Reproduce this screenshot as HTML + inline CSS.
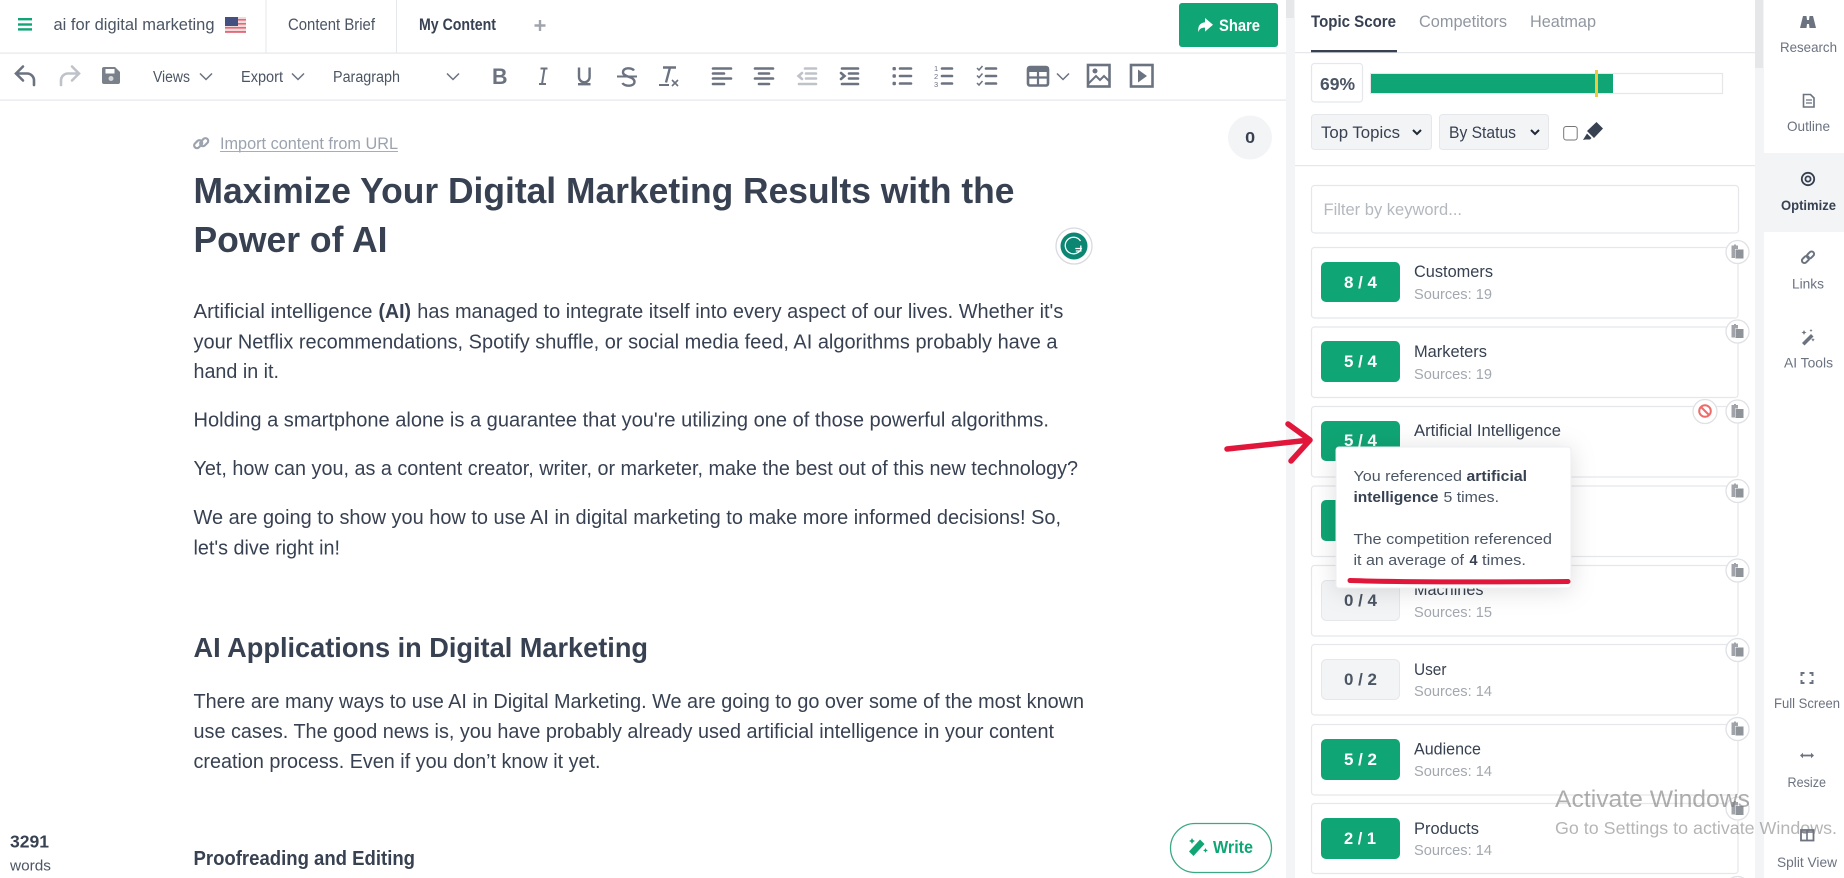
<!DOCTYPE html>
<html lang="en">
<head>
<meta charset="utf-8">
<title>ai for digital marketing</title>
<style>
html,body{margin:0;padding:0;background:#fff;width:1844px;height:878px;overflow:hidden}
svg{display:block;position:absolute;left:0;top:0}
text{font-family:"Liberation Sans",sans-serif;fill:#374151;white-space:pre}
.b{font-weight:700}
.p{font-size:20px}
.t{font-size:16.5px}
.s{font-size:15px;fill:#a3a8b0}
.g{font-size:17px;font-weight:700;fill:#fff}
.d{font-size:17px;font-weight:700;fill:#4b5563}
.r{font-size:14px;fill:#6b7280}
.tip{font-size:15px;fill:#4b5563}
.tb{font-size:15px;font-weight:700;fill:#374151}
.card{fill:#fff;stroke:#e5e7eb;stroke-width:1.2}
.ln{stroke:#6b7280;stroke-width:2.6;stroke-linecap:round;fill:none}
.li{stroke:#bfc3c9;stroke-width:2.6;stroke-linecap:round;fill:none}
.ch{stroke:#6b7280;stroke-width:1.5;fill:none}
</style>
</head>
<body>
<svg width="1844" height="878" viewBox="0 0 1844 878" xmlns="http://www.w3.org/2000/svg">
<defs>
<g id="cp">
<circle cx="0" cy="0" r="11.5" fill="#fff" stroke="#dfe1e5" stroke-width="1.3"/>
<path d="M-6-6.500h2.500v-1h2v1h2v3.500h-3v9h-3.500z" fill="#a0a4aa"/>
<rect x="-2" y="-2.500" width="8" height="9" fill="#8f949b"/>
</g>
</defs>

<!-- scroll strips -->
<rect x="1286" y="0" width="9" height="878" fill="#f3f4f6"/>
<rect x="1286" y="0" width="8" height="18" fill="#e6e7e9"/>
<rect x="1755" y="0" width="9" height="878" fill="#f3f4f6"/>
<rect x="1755" y="0" width="8" height="68" fill="#e6e7e9"/>

<!-- header -->
<rect x="0" y="52.500" width="1286" height="1.200" fill="#e5e7eb"/>
<rect x="0" y="99.500" width="1286" height="1.200" fill="#e5e7eb"/>
<rect x="265.500" y="0" width="1" height="53" fill="#e5e7eb"/>
<rect x="396" y="0" width="1" height="53" fill="#e5e7eb"/>
<g fill="#10a574"><rect x="18" y="18" width="14" height="2.400"/><rect x="18" y="23.300" width="14" height="2.400"/><rect x="18" y="28.200" width="14" height="2.400"/></g>
<text class="t" x="53.500" y="30" textLength="161" lengthAdjust="spacingAndGlyphs" style="fill:#4b5563">ai for digital marketing</text>
<rect x="225" y="17" width="21" height="16" fill="#f3dada"/>
<g fill="#e4687a"><rect x="225" y="19" width="21" height="1.600"/><rect x="225" y="23" width="21" height="1.600"/><rect x="225" y="27" width="21" height="1.600"/><rect x="225" y="31" width="21" height="1.800"/></g>
<rect x="225" y="17" width="13" height="9" fill="#44507f"/>
<text class="t" x="288" y="30" textLength="87" lengthAdjust="spacingAndGlyphs" style="fill:#4b5563">Content Brief</text>
<text class="t b" x="419" y="30" textLength="77" lengthAdjust="spacingAndGlyphs">My Content</text>
<path d="M540 20v11M534.500 25.500h11" stroke="#a0a5ad" stroke-width="2.400" fill="none"/>
<rect x="1179" y="3" width="99" height="44" rx="3" fill="#10a574"/>
<path d="M1205 18l8 6.800-8 6.800v-4c-3.600 0-5.600 1-6.600 4.600-.9-5.800 1.500-9.400 6.600-9.900z" fill="#fff"/>
<text class="t b" x="1219" y="31" textLength="41" lengthAdjust="spacingAndGlyphs" style="fill:#fff">Share</text>

<!-- toolbar -->
<path class="ln" d="M23 66.500L16 73.500l7 7M16 73.500h11a7 7 0 0 1 7 7v4.500"/>
<path class="li" d="M72 66.500l7 7-7 7M79 73.500H68a7 7 0 0 0-7 7v4.500"/>
<path d="M102 69a2 2 0 0 1 2-2h11l5 5v10a2 2 0 0 1-2 2h-14a2 2 0 0 1-2-2z" fill="#7b818a"/>
<rect x="105.500" y="69" width="9" height="4.500" fill="#fff"/>
<circle cx="111" cy="78.500" r="2.500" fill="#d5d7da"/>
<text class="t" x="153" y="82" textLength="37" lengthAdjust="spacingAndGlyphs" style="font-size:15.500px;fill:#4b5563">Views</text>
<path class="ch" d="M200 73.500l6 6 6-6"/>
<text class="t" x="241" y="82" textLength="42" lengthAdjust="spacingAndGlyphs" style="font-size:15.500px;fill:#4b5563">Export</text>
<path class="ch" d="M292 73.500l6 6 6-6"/>
<text class="t" x="333" y="82" textLength="67" lengthAdjust="spacingAndGlyphs" style="font-size:15.500px;fill:#4b5563">Paragraph</text>
<path class="ch" d="M447 73.500l6 6 6-6"/>
<text x="492" y="84" textLength="15.500" lengthAdjust="spacingAndGlyphs" style="font-size:22px;font-weight:700;fill:#6b7280">B</text>
<path d="M540.500 68.500h7M539 84h7M544.500 68.500l-2.500 15.500" stroke="#6b7280" stroke-width="2" fill="none"/>
<path d="M579 67.500v9.500a5.300 5.300 0 0 0 10.600 0v-9.500" stroke="#6b7280" stroke-width="2.400" fill="none"/>
<rect x="578" y="83" width="12.500" height="2.400" fill="#6b7280"/>
<path d="M634 70.500c-2-3-11-3.500-11 1.800 0 5.200 11.500 3.800 11.500 9.500 0 5-10 5-12 1.200" stroke="#6b7280" stroke-width="2.400" fill="none"/>
<rect x="617" y="75.500" width="20" height="2" fill="#6b7280"/>
<path d="M663 67.500h13M670 67.500l-4 15" stroke="#6b7280" stroke-width="2.400" fill="none"/>
<rect x="659" y="84" width="10" height="2" fill="#6b7280"/>
<path d="M672 80l6 6M678 80l-6 6" stroke="#6b7280" stroke-width="1.600"/>
<!-- aligns -->
<path class="ln" d="M713 68.500h18M713 73.500h11M713 78.500h18M713 84h11"/>
<path class="ln" d="M755 68.500h18M759 73.500h10M755 78.500h18M759 84h10"/>
<path class="li" d="M805 68.500h11M806 73.500h10M806 78.500h10M799 84h17M802 73l-3.500 3 3.500 3"/>
<path class="ln" d="M842 68.500h16M849 73.500h9M849 78.500h9M842 84h16M841 73l3.500 3-3.500 3"/>
<g fill="#6b7280"><rect x="892.500" y="67" width="3.400" height="3.400" rx="1"/><rect x="892.500" y="74.300" width="3.400" height="3.400" rx="1"/><rect x="892.500" y="81.800" width="3.400" height="3.400" rx="1"/></g>
<path class="ln" d="M900 68.500h11M900 76h11M900 83.500h11"/>
<text x="934" y="71" style="font-size:7.500px;fill:#6b7280">1</text><text x="934" y="79" style="font-size:7.500px;fill:#6b7280">2</text><text x="934" y="87" style="font-size:7.500px;fill:#6b7280">3</text>
<path class="ln" d="M942 68.500h10M942 76h10M942 83.500h10"/>
<path d="M977 68l2 2 3.500-4M977 75.500l2 2 3.500-4M977 83l2 2 3.500-4" stroke="#6b7280" stroke-width="1.500" fill="none"/>
<path class="ln" d="M986 68.500h10M986 76h10M986 83.500h10"/>
<rect x="1028" y="67" width="20" height="18.500" rx="2" fill="none" stroke="#6b7280" stroke-width="2.600"/>
<rect x="1028" y="67" width="20" height="5" fill="#6b7280"/>
<path d="M1038 70v15M1028 77.500h20" stroke="#6b7280" stroke-width="2.200"/>
<path class="ch" d="M1057 73.500l6 6 6-6"/>
<rect x="1088" y="65" width="21.500" height="21.500" fill="none" stroke="#6b7280" stroke-width="2.600"/>
<circle cx="1095" cy="71" r="2.500" fill="#6b7280"/>
<path d="M1088 84l8-8 4 4 4-4 5.500 5.500" stroke="#6b7280" stroke-width="2" fill="none"/>
<rect x="1131" y="65" width="21.500" height="21.500" fill="none" stroke="#6b7280" stroke-width="2.600"/>
<path d="M1138 69.500l9 6.500-9 6.500z" fill="#6b7280"/>

<!-- import -->
<g fill="none" stroke="#9ca3af" stroke-width="2.200"><rect x="193.500" y="141.500" width="9" height="5.500" rx="2.700" transform="rotate(-45 198 144)"/><rect x="199.500" y="139.500" width="9" height="5.500" rx="2.700" transform="rotate(-45 204 142)"/></g>
<text class="t" x="220" y="149" textLength="178" lengthAdjust="spacingAndGlyphs" style="fill:#9ca3af">Import content from URL</text>
<rect x="220" y="151" width="178" height="1" fill="#a8adb5"/>
<circle cx="1250" cy="137.500" r="22" fill="#f3f4f6"/>
<text class="b" x="1245.200" y="143" textLength="10" lengthAdjust="spacingAndGlyphs" style="font-size:16px">0</text>

<!-- content -->
<text class="b" x="193.500" y="203" textLength="821" lengthAdjust="spacingAndGlyphs" style="font-size:36px">Maximize Your Digital Marketing Results with the</text>
<text class="b" x="193.500" y="252" textLength="194" lengthAdjust="spacingAndGlyphs" style="font-size:36px">Power of AI</text>
<circle cx="1074" cy="246" r="18" fill="#fff" stroke="#d8dae0" stroke-width="1.300"/>
<circle cx="1074" cy="246" r="13.500" fill="#0a8672"/>
<path d="M1080.500 241a8.300 8.300 0 1 0 .8 7.500h-6M1080.800 245.500v5.500h-5" stroke="#fff" stroke-width="1.300" fill="none"/>

<text class="p" x="193.500" y="318" textLength="179" lengthAdjust="spacingAndGlyphs">Artificial intelligence</text>
<text class="p b" x="378.500" y="318" textLength="32.500" lengthAdjust="spacingAndGlyphs">(AI)</text>
<text class="p" x="417.300" y="318" textLength="646" lengthAdjust="spacingAndGlyphs">has managed to integrate itself into every aspect of our lives. Whether it's</text>
<text class="p" x="193.500" y="348.300" textLength="864" lengthAdjust="spacingAndGlyphs">your Netflix recommendations, Spotify shuffle, or social media feed, AI algorithms probably have a</text>
<text class="p" x="193.500" y="378" textLength="85.500" lengthAdjust="spacingAndGlyphs">hand in it.</text>
<text class="p" x="193.500" y="426.700" textLength="855.500" lengthAdjust="spacingAndGlyphs">Holding a smartphone alone is a guarantee that you're utilizing one of those powerful algorithms.</text>
<text class="p" x="193.500" y="475" textLength="884.500" lengthAdjust="spacingAndGlyphs">Yet, how can you, as a content creator, writer, or marketer, make the best out of this new technology?</text>
<text class="p" x="193.500" y="524" textLength="867.500" lengthAdjust="spacingAndGlyphs">We are going to show you how to use AI in digital marketing to make more informed decisions! So,</text>
<text class="p" x="193.500" y="554.300" textLength="146.500" lengthAdjust="spacingAndGlyphs">let's dive right in!</text>
<text class="b" x="193.500" y="657" textLength="454.500" lengthAdjust="spacingAndGlyphs" style="font-size:28px">AI Applications in Digital Marketing</text>
<text class="p" x="193.500" y="708" textLength="890.500" lengthAdjust="spacingAndGlyphs">There are many ways to use AI in Digital Marketing. We are going to go over some of the most known</text>
<text class="p" x="193.500" y="738" textLength="860.500" lengthAdjust="spacingAndGlyphs">use cases. The good news is, you have probably already used artificial intelligence in your content</text>
<text class="p" x="193.500" y="768" textLength="407" lengthAdjust="spacingAndGlyphs">creation process. Even if you don’t know it yet.</text>
<text class="b" x="193.500" y="865" textLength="221.500" lengthAdjust="spacingAndGlyphs" style="font-size:20px">Proofreading and Editing</text>

<text class="b" x="10" y="847.700" textLength="39" lengthAdjust="spacingAndGlyphs" style="font-size:17.500px">3291</text>
<text x="10" y="870.700" textLength="41" lengthAdjust="spacingAndGlyphs" style="font-size:15px;fill:#4b5563">words</text>

<rect x="1170.500" y="823.500" width="101" height="49" rx="24.500" fill="#fff" stroke="#3ba986" stroke-width="1.300"/>
<path d="M1189 853l11-12 4.500 4.500-11 12z" fill="#10a574" transform="translate(0 -1.500)"/>
<path d="M1192 838l1 2 2 1-2 1-1 2-1-2-2-1 2-1zM1205.500 848l.8 1.600 1.600.8-1.600.8-.8 1.600-.8-1.600-1.600-.8 1.600-.8z" fill="#10a574"/>
<text class="b" x="1213" y="853" textLength="40" lengthAdjust="spacingAndGlyphs" style="font-size:17.500px;fill:#10a574">Write</text>

<!-- right panel -->
<text class="t b" x="1311" y="27" textLength="85" lengthAdjust="spacingAndGlyphs">Topic Score</text>
<text class="t" x="1419" y="27" textLength="88" lengthAdjust="spacingAndGlyphs" style="fill:#9197a1">Competitors</text>
<text class="t" x="1530" y="27" textLength="66" lengthAdjust="spacingAndGlyphs" style="fill:#9197a1">Heatmap</text>
<rect x="1295" y="52" width="460" height="1.200" fill="#e5e7eb"/>
<rect x="1311" y="50" width="86" height="2.300" fill="#374151"/>
<rect x="1311.500" y="63.500" width="51" height="38.500" rx="3" fill="#fff" stroke="#e5e7eb" stroke-width="1.200"/>
<text class="b" x="1320" y="90" textLength="35" lengthAdjust="spacingAndGlyphs" style="font-size:17.500px;fill:#4b5563">69%</text>
<rect x="1370.500" y="73.500" width="352" height="20" fill="#fff" stroke="#e5e7eb" stroke-width="1.200"/>
<rect x="1371" y="74" width="242" height="19" fill="#10a574"/>
<rect x="1595" y="70" width="3" height="27" fill="#f0c93e"/>
<rect x="1311.500" y="114.500" width="120" height="35" rx="3" fill="#f3f4f6" stroke="#e5e7eb"/>
<text class="t" x="1321" y="138" textLength="79" lengthAdjust="spacingAndGlyphs">Top Topics</text>
<path d="M1413 130l4 4 4-4" stroke="#1f2937" stroke-width="2" fill="none"/>
<rect x="1439.500" y="114.500" width="109" height="35" rx="3" fill="#f3f4f6" stroke="#e5e7eb"/>
<text class="t" x="1449" y="138" textLength="67" lengthAdjust="spacingAndGlyphs">By Status</text>
<path d="M1531 130l4 4 4-4" stroke="#1f2937" stroke-width="2" fill="none"/>
<rect x="1563.700" y="126.500" width="13.500" height="13.500" rx="2.500" fill="#fff" stroke="#767676" stroke-width="1"/>
<path d="M1596.500 122l6.500 6.500-9 9.500-7-7zM1587 133.500l4.500 4.500-1.500 1.500h-4.500l-2.500.5 1.500-2.500z" fill="#374151"/>
<rect x="1295" y="165" width="460" height="1.200" fill="#e5e7eb"/>
<rect x="1311.500" y="185.500" width="427" height="47.500" rx="3" fill="#fff" stroke="#e5e7eb" stroke-width="1.200"/>
<text class="t" x="1323.500" y="215" textLength="138.500" lengthAdjust="spacingAndGlyphs" style="fill:#b4b8bf">Filter by keyword...</text>

<!-- items -->
<rect class="card" x="1311.500" y="247.500" width="426.500" height="70.500" rx="3"/>
<rect x="1321" y="262" width="79" height="40" rx="5" fill="#10a574"/>
<text class="g" x="1344" y="288" textLength="33" lengthAdjust="spacingAndGlyphs">8 / 4</text>
<text class="t" x="1414" y="277" textLength="79" lengthAdjust="spacingAndGlyphs">Customers</text>
<text class="s" x="1414" y="299" textLength="78" lengthAdjust="spacingAndGlyphs">Sources: 19</text>

<rect class="card" x="1311.500" y="327" width="426.500" height="70.500" rx="3"/>
<rect x="1321" y="341" width="79" height="41" rx="5" fill="#10a574"/>
<text class="g" x="1344" y="367" textLength="33" lengthAdjust="spacingAndGlyphs">5 / 4</text>
<text class="t" x="1414" y="357" textLength="73" lengthAdjust="spacingAndGlyphs">Marketers</text>
<text class="s" x="1414" y="379" textLength="78" lengthAdjust="spacingAndGlyphs">Sources: 19</text>

<rect class="card" x="1311.500" y="406.500" width="426.500" height="70.500" rx="3"/>
<rect x="1321" y="421" width="79" height="40" rx="5" fill="#10a574"/>
<text class="g" x="1344" y="446" textLength="33" lengthAdjust="spacingAndGlyphs">5 / 4</text>
<text class="t" x="1414" y="436" textLength="147" lengthAdjust="spacingAndGlyphs">Artificial Intelligence</text>

<rect class="card" x="1311.500" y="486" width="426.500" height="70.500" rx="3"/>
<rect x="1321" y="500" width="79" height="41" rx="5" fill="#10a574"/>

<rect class="card" x="1311.500" y="565.500" width="426.500" height="70.500" rx="3"/>
<rect x="1321.500" y="580.500" width="78" height="40" rx="5" fill="#f3f4f6" stroke="#e5e7eb"/>
<text class="d" x="1344" y="606" textLength="33" lengthAdjust="spacingAndGlyphs">0 / 4</text>
<text class="t" x="1414" y="595" textLength="69.500" lengthAdjust="spacingAndGlyphs">Machines</text>
<text class="s" x="1414" y="617" textLength="78" lengthAdjust="spacingAndGlyphs">Sources: 15</text>

<rect class="card" x="1311.500" y="644.500" width="426.500" height="70.500" rx="3"/>
<rect x="1321.500" y="659.500" width="78" height="40" rx="5" fill="#f3f4f6" stroke="#e5e7eb"/>
<text class="d" x="1344" y="685" textLength="33" lengthAdjust="spacingAndGlyphs">0 / 2</text>
<text class="t" x="1414" y="675" textLength="32.500" lengthAdjust="spacingAndGlyphs">User</text>
<text class="s" x="1414" y="696" textLength="78" lengthAdjust="spacingAndGlyphs">Sources: 14</text>

<rect class="card" x="1311.500" y="724.500" width="426.500" height="70.500" rx="3"/>
<rect x="1321" y="739" width="79" height="41" rx="5" fill="#10a574"/>
<text class="g" x="1344" y="765" textLength="33" lengthAdjust="spacingAndGlyphs">5 / 2</text>
<text class="t" x="1414" y="754.500" textLength="67" lengthAdjust="spacingAndGlyphs">Audience</text>
<text class="s" x="1414" y="776" textLength="78" lengthAdjust="spacingAndGlyphs">Sources: 14</text>

<rect class="card" x="1311.500" y="803.500" width="426.500" height="70" rx="3"/>
<rect x="1321" y="818" width="79" height="41" rx="5" fill="#10a574"/>
<text class="g" x="1344" y="844" textLength="32" lengthAdjust="spacingAndGlyphs">2 / 1</text>
<text class="t" x="1414" y="834" textLength="65" lengthAdjust="spacingAndGlyphs">Products</text>
<text class="s" x="1414" y="855" textLength="78" lengthAdjust="spacingAndGlyphs">Sources: 14</text>

<use href="#cp" x="1737.500" y="252"/>
<use href="#cp" x="1737.500" y="331.500"/>
<use href="#cp" x="1737.500" y="411.500"/>
<use href="#cp" x="1737.500" y="491"/>
<use href="#cp" x="1737.500" y="570.500"/>
<use href="#cp" x="1737.500" y="650"/>
<use href="#cp" x="1737.500" y="729"/>
<use href="#cp" x="1737.500" y="808.500"/>
<use href="#cp" x="1737.500" y="888"/>
<circle cx="1705" cy="411.500" r="12" fill="#fff" stroke="#dfe1e5" stroke-width="1.300"/>
<circle cx="1705" cy="411" r="5.800" fill="none" stroke="#ef6b6b" stroke-width="2"/>
<path d="M1701 407l8 8" stroke="#ef6b6b" stroke-width="2"/>

<!-- tooltip -->
<rect x="1336" y="447" width="235" height="141" rx="3" fill="#fff" stroke="#eceef1" style="filter:drop-shadow(0 2px 12px rgba(0,0,0,.13))"/>
<text class="tip" x="1353.500" y="481" textLength="108.500" lengthAdjust="spacingAndGlyphs">You referenced</text>
<text class="tb" x="1466.500" y="481" textLength="60.500" lengthAdjust="spacingAndGlyphs">artificial</text>
<text class="tb" x="1353.500" y="502" textLength="85" lengthAdjust="spacingAndGlyphs">intelligence</text>
<text class="tip" x="1443.500" y="502" textLength="55.500" lengthAdjust="spacingAndGlyphs">5 times.</text>
<text class="tip" x="1353.500" y="544" textLength="198.500" lengthAdjust="spacingAndGlyphs">The competition referenced</text>
<text class="tip" x="1353.500" y="565" textLength="110.500" lengthAdjust="spacingAndGlyphs">it an average of</text>
<text class="tb" x="1469.500" y="565" textLength="8" lengthAdjust="spacingAndGlyphs">4</text>
<text class="tip" x="1482" y="565" textLength="44" lengthAdjust="spacingAndGlyphs">times.</text>

<!-- annotations -->
<path d="M1350 580.500c60 2 150 1.500 218 1" stroke="#e0173b" stroke-width="5" stroke-linecap="round" fill="none"/>
<path d="M1227 449l83-9M1288 424l22 16-19 21" stroke="#e0173b" stroke-width="5.500" stroke-linecap="round" stroke-linejoin="round" fill="none"/>

<!-- rail -->
<rect x="1764" y="153" width="80" height="79" fill="#f3f4f6"/>
<path d="M1803 16h3.500l.5 4h2l.5-4h3.500l3 12h-6.500l-.5-4h-2l-.5 4h-6.500z" fill="#6b7280"/>
<text class="r" x="1780" y="52" textLength="57" lengthAdjust="spacingAndGlyphs">Research</text>
<path d="M1803.500 94.500h7l3.500 3.500v9h-10.500z" fill="none" stroke="#6b7280" stroke-width="1.600"/>
<path d="M1806 100h6M1806 103h6" stroke="#6b7280" stroke-width="1.300"/>
<text class="r" x="1787" y="131" textLength="43" lengthAdjust="spacingAndGlyphs">Outline</text>
<circle cx="1808" cy="179" r="6.200" fill="none" stroke="#374151" stroke-width="1.800"/>
<circle cx="1808" cy="179" r="2.600" fill="none" stroke="#374151" stroke-width="1.800"/>
<text class="r b" x="1781" y="210" textLength="55" lengthAdjust="spacingAndGlyphs" style="fill:#374151">Optimize</text>
<g fill="none" stroke="#6b7280" stroke-width="2"><rect x="1801.500" y="257" width="8" height="5" rx="2.500" transform="rotate(-45 1805.500 259.500)"/><rect x="1806.500" y="252.500" width="8" height="5" rx="2.500" transform="rotate(-45 1810.500 255)"/></g>
<text class="r" x="1792" y="288.500" textLength="32" lengthAdjust="spacingAndGlyphs">Links</text>
<path d="M1802 343l9-9 2.500 2.500-9 9z" fill="#6b7280"/>
<path d="M1804 330l.8 1.700 1.700.8-1.700.8-.8 1.700-.8-1.700-1.700-.8 1.700-.8zM1813 338l.6 1.200 1.200.6-1.200.6-.6 1.200-.6-1.200-1.200-.6 1.200-.6zM1811 329l.5 1 1 .5-1 .5-.5 1-.5-1-1-.5 1-.5z" fill="#6b7280"/>
<text class="r" x="1784" y="367.500" textLength="49" lengthAdjust="spacingAndGlyphs">AI Tools</text>
<path d="M1801.500 676v-3h3M1809.500 673h3v3M1812.500 680v3h-3M1804.500 683h-3v-3" fill="none" stroke="#6b7280" stroke-width="2"/>
<text class="r" x="1774" y="708" textLength="66" lengthAdjust="spacingAndGlyphs">Full Screen</text>
<path d="M1801 755.500h12" stroke="#6b7280" stroke-width="1.800"/>
<path d="M1800 755.500l3-2.800v5.600zM1814 755.500l-3-2.800v5.600z" fill="#6b7280"/>
<text class="r" x="1787.500" y="787" textLength="38.500" lengthAdjust="spacingAndGlyphs">Resize</text>
<rect x="1801" y="830" width="12.500" height="10.500" fill="none" stroke="#6b7280" stroke-width="1.800"/>
<path d="M1801 832h12.500M1807 830v10" stroke="#6b7280" stroke-width="1.600"/>
<text class="r" x="1777" y="867" textLength="60" lengthAdjust="spacingAndGlyphs">Split View</text>

<!-- watermark -->
<text x="1555" y="807" textLength="195" lengthAdjust="spacingAndGlyphs" style="font-size:24px;fill:rgba(120,120,120,.6)">Activate Windows</text>
<text x="1555" y="834" textLength="282" lengthAdjust="spacingAndGlyphs" style="font-size:17.500px;fill:rgba(120,120,120,.55)">Go to Settings to activate Windows.</text>
</svg>
</body>
</html>
